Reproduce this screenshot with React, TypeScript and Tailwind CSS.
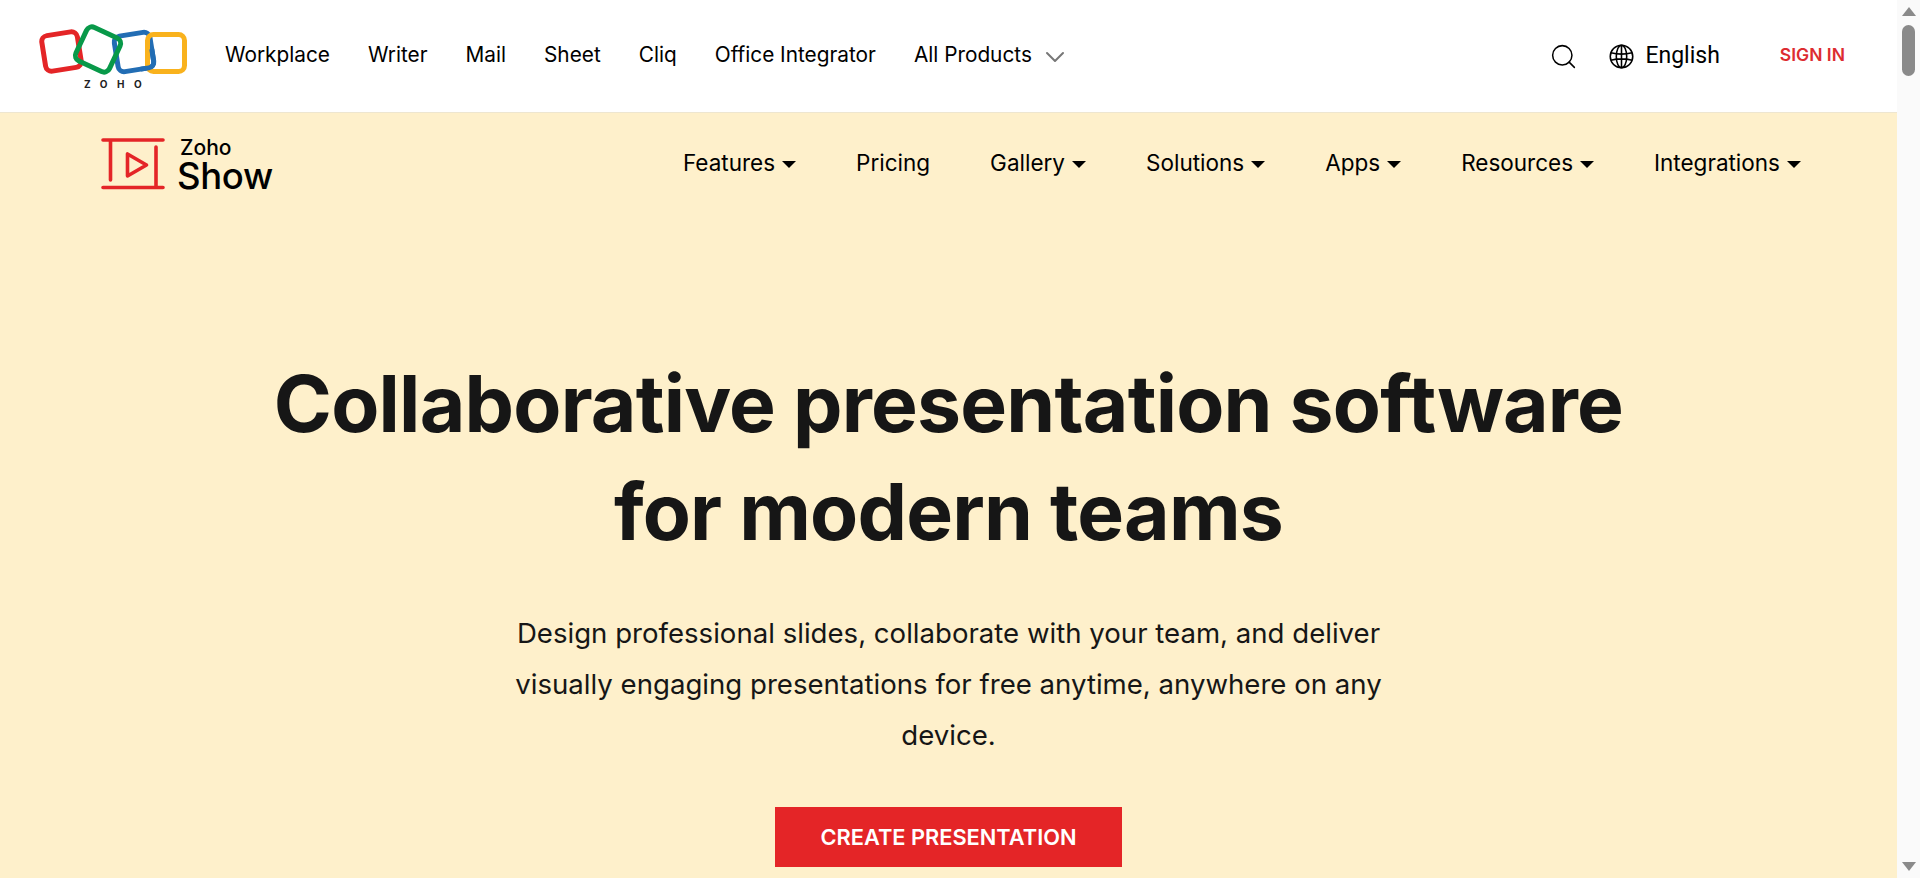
import { ChevronDown, Search } from "lucide-react";

const topLinks = ["Workplace", "Writer", "Mail", "Sheet", "Cliq", "Office Integrator"];
const subLinks = [
    { label: "Features", caret: true },
    { label: "Pricing", caret: false },
    { label: "Gallery", caret: true },
    { label: "Solutions", caret: true },
    { label: "Apps", caret: true },
    { label: "Resources", caret: true },
    { label: "Integrations", caret: true },
];

function ZohoLogo() {
    return (
        <div className="flex flex-col items-center w-[148px] self-start mt-[20px]">
            <svg width="148" height="58" viewBox="0 0 148 58" fill="none" strokeWidth="5">
                <rect x="4.500" y="13.500" width="36" height="36" rx="6" stroke="#e42527" transform="rotate(-9 22.500 31.500)" />
                <rect x="77" y="14" width="36" height="36" rx="6" stroke="#226db4" transform="rotate(-9 95 32)" />
                <rect x="40.500" y="11" width="37" height="37" rx="6" stroke="#089949" transform="rotate(25 59 29.500)" />
                <rect x="108.500" y="14.500" width="37" height="37" rx="6" stroke="#f9b21d" />
                {/* parte do azul que passa por cima do amarelo */}
                <path d="M113 32v12a6 6 0 0 1-6 6h-8" stroke="#226db4" transform="rotate(-9 95 32)" />
            </svg>
            <span className="text-[10px] leading-[12px] font-bold tracking-[0.95em] pl-[9px] text-[#222]">ZOHO</span>
        </div>
    );
}

function ShowLogo() {
    return (
        <div className="flex items-start">
            <svg width="64" height="54" viewBox="0 0 64 54" fill="none" stroke="#e42527" strokeWidth="3.6" strokeLinecap="round">
                <path d="M2 3h60M2 50.500h60M9.500 3v40M55 10v40.500" />
                <path d="M26.500 17v22l19-11z" strokeLinejoin="round" />
            </svg>
            <div className="flex flex-col ml-[12px] mt-[1px] font-['Inter',sans-serif] text-black">
                <span className="pl-[3px] text-[21px] leading-[20px] font-medium">Zoho</span>
                <span className="text-[36.500px] leading-[36px] font-medium tracking-[-0.01em]">Show</span>
            </div>
        </div>
    );
}

function GlobeIcon() {
    return (
        <svg width="25" height="25" viewBox="0 0 24 24" fill="none" stroke="#000" strokeWidth="1.500" className="ml-[31px]">
            <circle cx="12" cy="12" r="10.800" />
            <ellipse cx="12" cy="12" rx="5" ry="10.800" />
            <path d="M12 1.200v21.600M1.800 8.500q10.200 2.400 20.400 0M1.800 15.500q10.200-2.400 20.400 0" />
        </svg>
    );
}

export default function App() {
    return (
        <div className="flex h-[878px] overflow-hidden bg-white font-['Inter',sans-serif]">
            <div className="flex-1 min-w-0 flex flex-col">
                {/* barra superior */}
                <header className="h-[113px] shrink-0 flex items-center pl-[39px] pr-[52px] border-b border-[#eee6d0] bg-white">
                    <ZohoLogo />
                    <nav className="flex items-center gap-[38px] ml-[38px] mb-[2px] text-[20.800px] text-black">
                        {topLinks.map((link) => (
                            <a key={link}>{link}</a>
                        ))}
                        <a className="flex items-center gap-[7px]">
                            All Products
                            <ChevronDown size={32} strokeWidth={1.5} className="text-[#777] my-[-6px] mt-[-2px]" />
                        </a>
                    </nav>
                    <div className="ml-auto flex items-center text-black">
                        <Search size={29} strokeWidth={1.25} />
                        <GlobeIcon />
                        <span className="ml-[11px] text-[23px] font-['Roboto',sans-serif]">English</span>
                        <span className="ml-[60px] -mt-[2px] text-[17.500px] font-semibold text-[#dd2c30]">SIGN IN</span>
                    </div>
                </header>

                <main className="flex-1 flex flex-col bg-[#fef0cb] text-[#161616]">
                    <div className="flex items-center justify-between pl-[101px] pr-[96px] pt-[24px]">
                        <ShowLogo />
                        <nav className="flex items-center gap-[60px] mb-[5px] text-[22.500px] text-black">
                            {subLinks.map((link) => (
                                <a key={link.label} className="flex items-center gap-[7px]">
                                    {link.label}
                                    {link.caret && <span className="w-0 h-0 mt-[3px] border-x-[7px] border-x-transparent border-t-[7px] border-t-black" />}
                                </a>
                            ))}
                        </nav>
                    </div>

                    <h1 className="mt-[156px] text-center text-[78.600px] leading-[108px] font-bold tracking-[-0.01em]">
                        Collaborative presentation software
                        <br />
                        for modern teams
                    </h1>
                    <p className="mt-[42px] w-[900px] mx-auto text-center text-[27.600px] leading-[51px]">
                        Design professional slides, collaborate with your team, and deliver visually engaging presentations for free anytime, anywhere on any device.
                    </p>
                    <a className="mt-[46px] self-center w-[347px] h-[60px] shrink-0 flex items-center justify-center bg-[#e42527] text-white text-[21.800px] font-semibold">
                        CREATE PRESENTATION
                    </a>
                </main>
            </div>

            {/* barra de rolagem */}
            <div className="w-[23px] shrink-0 bg-[#fafafa] flex flex-col items-center pt-[7px]">
                <span className="w-0 h-0 border-x-[7px] border-x-transparent border-b-[9px] border-b-[#8a8a8a]" />
                <span className="w-[13px] h-[51px] mt-[9px] rounded-full bg-[#8a8a8a]" />
                <span className="mt-auto mb-[7px] w-0 h-0 border-x-[7px] border-x-transparent border-t-[9px] border-t-[#8a8a8a]" />
            </div>
        </div>
    );
}
